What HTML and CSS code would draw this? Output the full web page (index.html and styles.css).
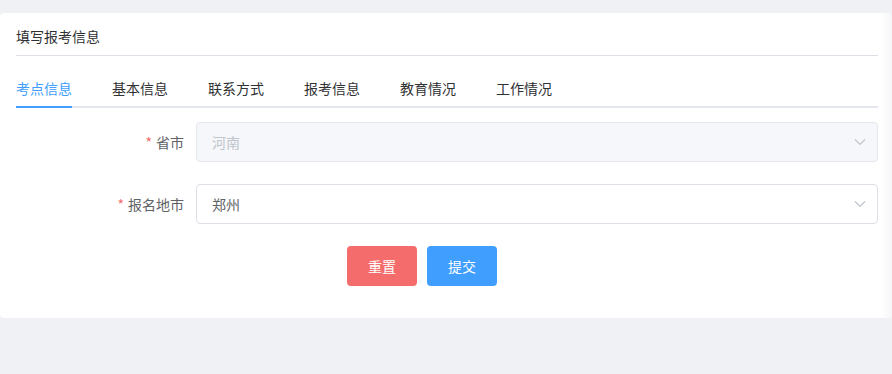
FILE: index.html
```html
<!DOCTYPE html>
<html lang="zh-CN">
<head>
  <meta charset="UTF-8" />
  <meta name="viewport" content="width=device-width, initial-scale=1.0"/>
  <title>填写报考信息</title>
  <link rel="stylesheet" href="styles.css">
</head>
<body>
  <div class="card">
    <div class="card-header">填写报考信息</div>

    <div class="tabs">
      <div class="tab active">考点信息</div>
      <div class="tab">基本信息</div>
      <div class="tab">联系方式</div>
      <div class="tab">报考信息</div>
      <div class="tab">教育情况</div>
      <div class="tab">工作情况</div>
    </div>

    <form class="form">
      <div class="form-item">
        <label class="form-label"><span class="required">*</span>省市</label>
        <div class="select disabled">
          <span class="select-value">河南</span>
          <svg class="arrow" width="12" height="8" viewBox="0 0 12 8"><path d="M1 1.5 L6 6.5 L11 1.5" fill="none" stroke="#c0c4cc" stroke-width="1.2"/></svg>
        </div>
      </div>
      <div class="form-item">
        <label class="form-label"><span class="required">*</span>报名地市</label>
        <div class="select">
          <span class="select-value">郑州</span>
          <svg class="arrow" width="12" height="8" viewBox="0 0 12 8"><path d="M1 1.5 L6 6.5 L11 1.5" fill="none" stroke="#c0c4cc" stroke-width="1.2"/></svg>
        </div>
      </div>
      <div class="form-actions">
        <button type="reset" class="btn btn-danger">重置</button>
        <button type="submit" class="btn btn-primary">提交</button>
      </div>
    </form>
  </div>
</body>
</html>
```

FILE: styles.css
```css
body {
  margin: 0;
  padding-top: 13px;
  height: 361px;
  background-color: #f0f1f5;
  font-family: "Noto Sans CJK SC", "Liberation Sans", sans-serif;
  font-size: 14px;
  overflow: hidden;
}
.card {
  background: linear-gradient(to right, #fff calc(100% - 12px), #f6f6f8);
  border-radius: 4px;
  padding: 0 14px 10px 16px;
}
.card-header {
  padding: 13px 0 9px;
  line-height: 20px;
  color: #303133;
  border-bottom: 1px solid #dcdfe6;
}
.tabs {
  display: flex;
  margin-top: 12px;
  margin-bottom: 14px;
  border-bottom: 2px solid #e4e7ed;
}
.tab {
  height: 38px;
  line-height: 40px;
  padding: 0 20px;
  color: #303133;
  border-bottom: 2px solid transparent;
  margin-bottom: -2px;
}
.tab:first-child {
  padding-left: 0;
}
.tab.active {
  color: #409eff;
  border-bottom-color: #409eff;
}
.tab.active + .tab {
  margin-left: 0;
}
.tab:first-child.active {
  padding-right: 0;
  margin-right: 20px;
}
.form-item {
  display: flex;
  margin-bottom: 22px;
}
.form-label {
  width: 168px;
  padding-right: 12px;
  text-align: right;
  line-height: 40px;
  color: #606266;
}
.required {
  color: #f56c6c;
  margin-right: 4px;
}
.select {
  flex: 1;
  height: 38px;
  display: flex;
  align-items: center;
  justify-content: space-between;
  padding: 0 11px 0 15px;
  border: 1px solid #dcdfe6;
  border-radius: 4px;
  background-color: #fff;
  color: #606266;
}
.select.disabled {
  background-color: #f5f7fa;
  border-color: #e4e7ed;
  color: #c0c4cc;
}
.form-actions {
  display: flex;
  gap: 10px;
  padding-left: 331px;
  margin-bottom: 22px;
}
.btn {
  width: 70px;
  height: 40px;
  border: none;
  border-radius: 4px;
  color: #fff;
  font-family: inherit;
  font-size: 14px;
  cursor: pointer;
}
.btn-danger {
  background-color: #f56c6c;
}
.btn-primary {
  background-color: #409eff;
}
```
